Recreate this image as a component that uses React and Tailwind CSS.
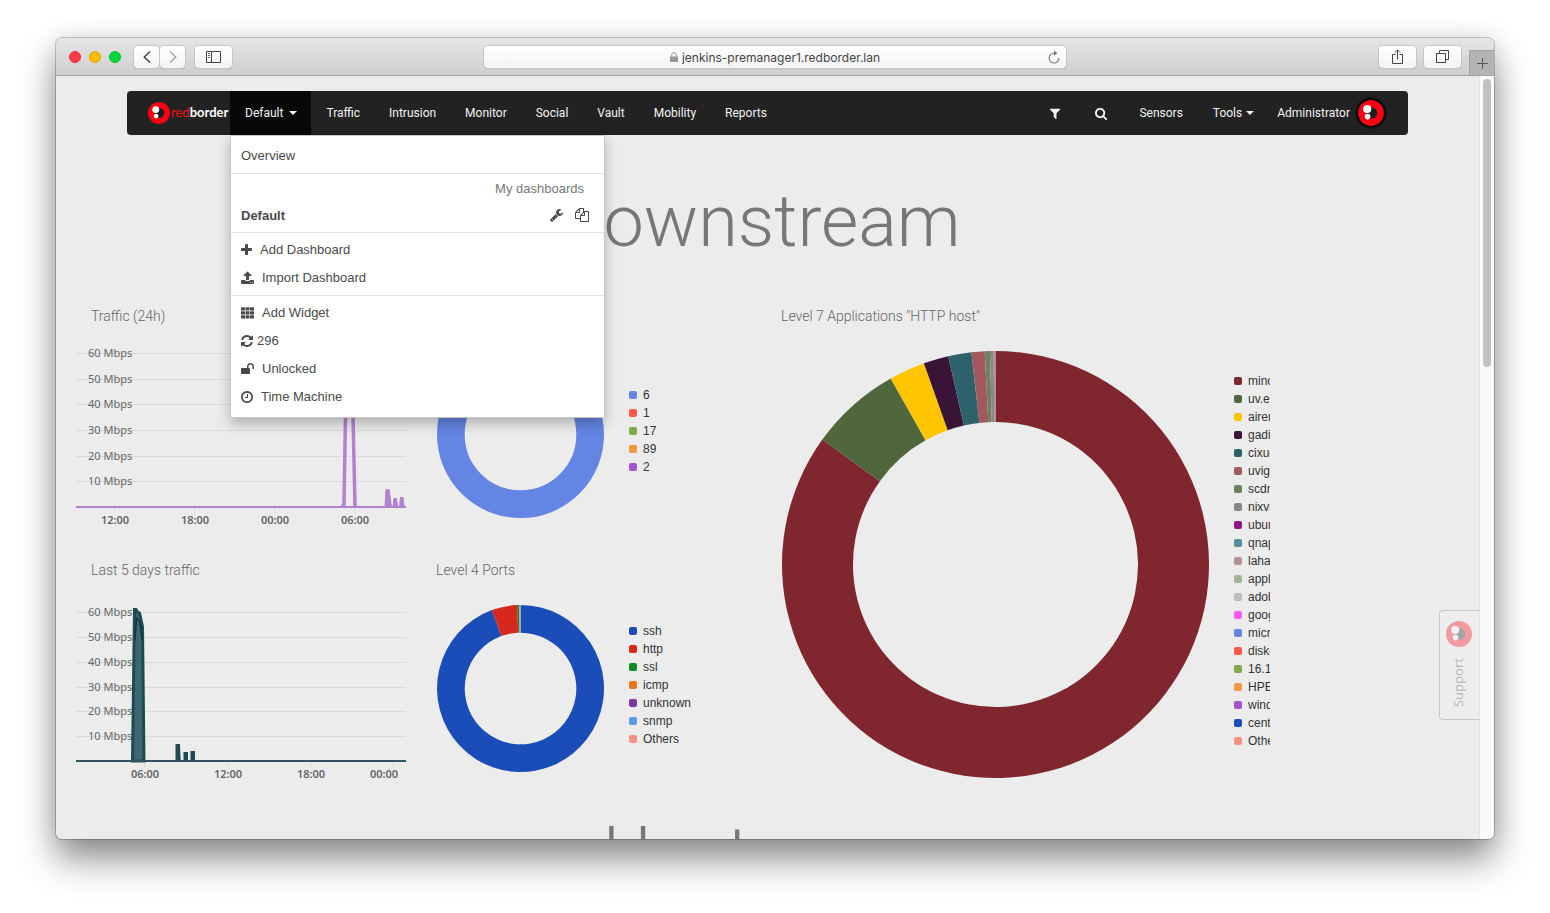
import React from "react";

const ICONS = {
  filter: ["192 0 1408 1792", "M1595 295q17 41-14 70l-493 493v742q0 42-39 59-13 5-25 5-27 0-45-19l-256-256q-19-19-19-45v-486l-493-493q-31-29-14-70 17-39 59-39h1280q42 0 59 39z"],
  search: ["64 0 1664 1792", "M1216 832q0-185-131.5-316.5t-316.5-131.5-316.5 131.5-131.5 316.5 131.5 316.5 316.5 131.5 316.5-131.5 131.5-316.5zm512 832q0 52-38 90t-90 38q-54 0-90-38l-343-342q-179 124-399 124-143 0-273.5-55.5t-225-150-150-225-55.5-273.5 55.5-273.5 150-225 225-150 273.5-55.5 273.5 55.5 225 150 150 225 55.5 273.5q0 220-124 399l343 343q37 37 37 90z"],
  plus: ["192 0 1408 1792", "M1600 736v192q0 40-28 68t-68 28h-416v416q0 40-28 68t-68 28h-192q-40 0-68-28t-28-68v-416h-416q-40 0-68-28t-28-68v-192q0-40 28-68t68-28h416v-416q0-40 28-68t68-28h192q40 0 68 28t28 68v416h416q40 0 68 28t28 68z"],
  upload: ["64 0 1664 1792", "M1344 1472q0-26-19-45t-45-19-45 19-19 45 19 45 45 19 45-19 19-45zm256 0q0-26-19-45t-45-19-45 19-19 45 19 45 45 19 45-19 19-45zm128-224v320q0 40-28 68t-68 28h-1472q-40 0-68-28t-28-68v-320q0-40 28-68t68-28h427q21 56 70.5 92t110.5 36h256q61 0 110.5-36t70.5-92h427q40 0 68 28t28 68zm-325-648q-17 40-59 40h-256v448q0 26-19 45t-45 19h-256q-26 0-45-19t-19-45v-448h-256q-42 0-59-40-17-39 14-69l448-448q18-19 45-19t45 19l448 448q31 30 14 69z"],
  refresh: ["0 0 1536 1792", "M1511 1056q0 5-1 7-64 268-268 434.5t-478 166.5q-146 0-282.5-55t-243.5-157l-129 129q-19 19-45 19t-45-19-19-45v-448q0-26 19-45t45-19h448q26 0 45 19t19 45-19 45l-137 137q71 66 161 102t187 36q134 0 250-65t186-179q11-17 53-117 8-23 30-23h192q13 0 22.5 9.5t9.5 22.5zm25-800v448q0 26-19 45t-45 19h-448q-26 0-45-19t-19-45 19-45l138-138q-148-137-349-137-134 0-250 65t-186 179q-11 17-53 117-8 23-30 23h-199q-13 0-22.5-9.5t-9.5-22.5v-7q65-268 270-434.5t480-166.5q146 0 284 55.5t245 156.5l130-129q19-19 45-19t45 19 19 45z"],
  unlock: ["64 0 1664 1792", "M1728 576v256q0 26-19 45t-45 19h-64q-26 0-45-19t-19-45v-256q0-106-75-181t-181-75-181 75-75 181v192h96q40 0 68 28t28 68v576q0 40-28 68t-68 28h-960q-40 0-68-28t-28-68v-576q0-40 28-68t68-28h672v-192q0-185 131.5-316.5t316.5-131.5 316.5 131.5 131.5 316.5z"],
  clock: ["128 0 1536 1792", "M1024 544v448q0 14-9 23t-23 9h-320q-14 0-23-9t-9-23v-64q0-14 9-23t23-9h224v-352q0-14 9-23t23-9h64q14 0 23 9t9 23zm416 352q0-148-73-273t-198-198-273-73-273 73-198 198-73 273 73 273 198 198 273 73 273-73 198-198 73-273zm224 0q0 209-103 385.5t-279.5 279.5-385.5 103-385.5-103-279.5-279.5-103-385.5 103-385.5 279.5-279.5 385.5-103 385.5 103 279.5 279.5 103 385.5z"],
  wrench: ["64 0 1664 1792", "M448 1472q0-26-19-45t-45-19-45 19-19 45 19 45 45 19 45-19 19-45zm644-420l-682 682q-37 37-90 37-52 0-91-37l-106-108q-38-36-38-90 0-53 38-91l681-681q39 98 114.5 173.5t173.5 114.5zm634-435q0 39-23 106-47 134-164.5 217.5t-258.5 83.5q-185 0-316.5-131.5t-131.5-316.5 131.5-316.5 316.5-131.5q58 0 121.5 16.5t107.5 46.5q16 11 16 28t-16 28l-293 169v224l193 107q5-3 79-48.5t135.5-81 70.5-35.5q15 0 23.5 10t8.5 25z"],
  files: ["0 0 1792 1792", "M1696 384q40 0 68 28t28 68v1216q0 40-28 68t-68 28h-960q-40 0-68-28t-28-68v-288h-544q-40 0-68-28t-28-68v-672q0-40 20-88t48-76l408-408q28-28 76-48t88-20h416q40 0 68 28t28 68v328q68-40 128-40h416zm-544 213l-299 299h299v-299zm-640-384l-299 299h299v-299zm196 647l316-316v-416h-384v416q0 40-28 68t-68 28h-416v640h512v-256q0-40 20-88t48-76zm956 804v-1152h-384v416q0 40-28 68t-68 28h-416v640h896z"],
  grid: ["64 0 1664 1792", [160, 672, 1184].map((y) => [64, 640, 1216].map((x) => `M${x + 70} ${y}h372q70 0 70 70v272q0 70-70 70h-372q-70 0-70-70v-272q0-70 70-70z`).join("")).join("")],
};

function Icon({ name, className = "h-3.5" }) {
  const [box, d] = ICONS[name];
  return (
    <svg viewBox={box} className={`w-auto shrink-0 fill-current ${className}`} aria-hidden="true">
      <path d={d} />
    </svg>
  );
}

function Mark({ className }) {
  return (
    <svg viewBox="0 0 26 26" className={className} aria-hidden="true">
      <circle cx="13" cy="13" r="13" fill="#ff0012" />
      <circle cx="13.500" cy="13" r="5.700" fill="#1d1d1d" />
      <circle cx="9.2" cy="9" r="4.1" fill="#fff" />
      <circle cx="9.6" cy="16.6" r="2.800" fill="#fff" />
    </svg>
  );
}

const toolButton =
  "flex h-[22px] items-center justify-center rounded bg-gradient-to-b from-white to-[#f3f3f3] text-[#444] shadow-[0_0_0_1px_#c6c6c6,0_1px_1px_#9a9a9a]";

function BrowserBar() {
  return (
    <header className="grid h-[38px] shrink-0 grid-cols-[1fr_minmax(0,582px)_1fr] items-center border-b border-[#a3a3a3] bg-gradient-to-b from-[#e6e6e6] to-[#cecece]">
      <div className="flex items-center pl-[13px]">
        <div className="flex gap-2">
          <button aria-label="Close" className="size-3 rounded-full border border-[#e2333b] bg-[#ff3b47]" />
          <button aria-label="Minimise" className="size-3 rounded-full border border-[#e0a200] bg-[#ffbd00]" />
          <button aria-label="Zoom" className="size-3 rounded-full border border-[#10b92e] bg-[#00d63a]" />
        </div>
        <div className="ml-[13px] flex gap-px">
          <button aria-label="Back" className={`w-[25px] ${toolButton}`}>
            <svg viewBox="0 0 8 14" className="h-3.5 w-2" fill="none" stroke="currentColor" strokeWidth="1.5"><path d="M7 1.5 1.3 7 7 12.5" /></svg>
          </button>
          <button aria-label="Forward" className={`w-[25px] ${toolButton}`}>
            <svg viewBox="0 0 8 14" className="h-3.5 w-2" fill="none" stroke="#aaa" strokeWidth="1.5"><path d="M1 1.5 6.7 7 1 12.5" /></svg>
          </button>
        </div>
        <button aria-label="Sidebar" className={`ml-2.5 w-[37px] ${toolButton}`}>
          <svg viewBox="0 0 15 12" className="h-3 w-[15px]" fill="none" stroke="currentColor"><path d="M.5.5h14v11H.5zM5.500.5v11" /><path d="M2 2.500h2M2 4.500h2M2 6.500h2" strokeWidth=".8" /></svg>
        </button>
      </div>
      <form className="flex h-[22px] items-center rounded bg-gradient-to-b from-white to-[#f3f3f3] pr-1.5 pl-[18px] shadow-[0_0_0_1px_#c6c6c6,0_1px_1px_#9a9a9a]">
        <label className="flex flex-1 items-center justify-center gap-1">
          <svg viewBox="0 0 8 10" className="h-2.5 w-2" aria-hidden="true"><path d="M0 4.500h8V10H0z" fill="#999" /><path d="M1.700 5V3a2.300 2.300 0 0 1 4.600 0v2" fill="none" stroke="#999" /></svg>
          <input aria-label="Address" defaultValue="jenkins-premanager1.redborder.lan" className="field-sizing-content bg-transparent pt-0.5 font-['Inter',sans-serif] text-xs text-[#444] outline-none" />
        </label>
        <button type="button" aria-label="Reload">
          <svg viewBox="0 0 12 14" className="h-3.5 w-3" fill="none" stroke="#777" strokeWidth="1.100"><path d="M6 3.200a4.900 4.900 0 1 0 4.900 4.900" /><path d="M6 .6v5.200l3.400-2.600z" fill="#777" stroke="none" /></svg>
        </button>
      </form>
      <div className="flex h-full items-center justify-end">
        <button aria-label="Share" className={`w-[37px] ${toolButton}`}>
          <svg viewBox="0 0 11 16" className="h-4 w-[11px]" fill="none" stroke="currentColor"><path d="M3.500 5.500h-3v9h10v-9h-3M5.500 10.500V1M3 3.500 5.500.9 8 3.500" /></svg>
        </button>
        <button aria-label="Show tabs" className={`ml-2 w-[37px] ${toolButton}`}>
          <svg viewBox="0 0 13 13" className="size-[13px]" fill="none" stroke="currentColor"><path d="M.5 3.500h9v9h-9zM3.500 3.500v-3h9v9h-3" /></svg>
        </button>
        <button aria-label="New tab" className="ml-2 flex h-[25px] w-[25px] items-center justify-center self-end border-t border-l border-[#a3a3a3] bg-[#b4b4b4]">
          <svg viewBox="0 0 11 11" className="size-[11px]" stroke="#555"><path d="M5.500 0v11M0 5.500h11" /></svg>
        </button>
      </div>
    </header>
  );
}

const Caret = () => (
  <svg viewBox="0 0 8 4" className="h-1 w-2 fill-current" aria-hidden="true"><path d="M0 0h8L4 4z" /></svg>
);

const navLink = "flex h-11 items-center pl-[15px]";
const row = "flex h-7 w-full items-center px-2.5";

function DashboardMenu() {
  return (
    <div className="absolute top-full left-0 z-20 w-[375px] border border-[#c8c8c8] bg-white pt-1.5 pb-1.5 font-['Liberation_Sans',Arial,sans-serif] text-[13px] text-[#4a4a4a] shadow-[0_6px_12px_rgba(0,0,0,0.25)]">
      <a href="#overview" className={row}>Overview</a>
      <hr className="mt-[3px] border-[#e2e2e2]" />
      <p className="flex h-7 items-center justify-end pt-0.5 pr-5 text-[#777]">My dashboards</p>
      <div className={`${row} justify-between pr-[15px]`}>
        <a href="#default" className="font-bold">Default</a>
        <span className="flex gap-3 pb-0.5">
          <button aria-label="Configure"><Icon name="wrench" /></button>
          <button aria-label="Duplicate"><Icon name="files" /></button>
        </span>
      </div>
      <hr className="mt-0.5 mb-[3px] border-[#e2e2e2]" />
      <button className={`${row} gap-2`}><Icon name="plus" />Add Dashboard</button>
      <button className={`${row} gap-2`}><Icon name="upload" />Import Dashboard</button>
      <hr className="mt-[3px] mb-[3px] border-[#e2e2e2]" />
      <button className={`${row} gap-2`}><Icon name="grid" />Add Widget</button>
      <button className={`${row} gap-1`}><Icon name="refresh" />296</button>
      <button className={`${row} gap-2`}><Icon name="unlock" />Unlocked</button>
      <button className={`${row} gap-2`}><Icon name="clock" />Time Machine</button>
    </div>
  );
}

function NavBar() {
  return (
    <nav className="mx-[71px] mt-[15px] flex h-11 items-center rounded bg-[#222] text-xs text-[#f2f2f2]">
      <a href="#home" className="flex w-[103px] items-center gap-px pl-[21px] font-['Lato',sans-serif] text-[13px]">
        <Mark className="size-[22px] shrink-0" />
        <span className="text-[#f0101c]">red<span className="font-bold text-white">border</span></span>
      </a>
      <div className="relative">
        <button className={`${navLink} gap-1.5 bg-[#080808] pr-3.5`}>Default<Caret /></button>
        <DashboardMenu />
      </div>
      {["Traffic", "Intrusion", "Monitor", "Social", "Vault", "Mobility", "Reports"].map((t) => (
        <a key={t} href={`#${t.toLowerCase()}`} className={`${navLink} pr-3.5`}>{t}</a>
      ))}
      <div className="ml-auto flex items-center">
        <button aria-label="Filter" className="flex h-11 w-[46px] items-center justify-center"><Icon name="filter" className="h-[13px]" /></button>
        <button aria-label="Search" className="flex h-11 w-[46px] items-center justify-center"><Icon name="search" className="h-[13px]" /></button>
        <a href="#sensors" className={`${navLink} pr-[15px]`}>Sensors</a>
        <button className={`${navLink} gap-1 pr-[15px]`}>Tools<Caret /></button>
        <button className="flex h-11 items-center gap-2 pr-6 pl-2">
          Administrator
          <Mark className="size-[26px] rounded-full shadow-[0_0_2px_2px_#000]" />
        </button>
      </div>
    </nav>
  );
}

function Donut({ size, outer, inner, slices, className }) {
  const c = size / 2;
  const at = (deg, r) => {
    const a = (deg * Math.PI) / 180;
    return `${(c + r * Math.sin(a)).toFixed(2)} ${(c - r * Math.cos(a)).toFixed(2)}`;
  };
  let start = 0;
  return (
    <svg viewBox={`0 0 ${size} ${size}`} className={`shrink-0 ${className}`} aria-hidden="true">
      {slices.map(([end, fill]) => {
        const from = start;
        start = end;
        if (end - from >= 360) {
          return <circle key={end} cx={c} cy={c} r={(outer + inner) / 2} fill="none" stroke={fill} strokeWidth={outer - inner} />;
        }
        const big = end - from > 180 ? 1 : 0;
        return <path key={end} fill={fill} d={`M${at(from, outer)}A${outer} ${outer} 0 ${big} 1 ${at(end, outer)}L${at(end, inner)}A${inner} ${inner} 0 ${big} 0 ${at(from, inner)}Z`} />;
      })}
    </svg>
  );
}

function Legend({ items, className = "" }) {
  return (
    <ul className={`overflow-hidden pb-2 font-['Liberation_Sans',Arial,sans-serif] text-xs text-[#333] ${className}`}>
      {items.map(([label, color]) => (
        <li key={label} className="flex h-[18px] items-center gap-1.5 whitespace-nowrap">
          <span className="size-2 shrink-0 rounded-[2px]" style={{ backgroundColor: color }} />
          {label}
        </li>
      ))}
    </ul>
  );
}

function Widget({ title, className = "", children }) {
  return (
    <section className={`pt-1.5 ${className}`}>
      <h3 className="h-5 pl-[15px] text-sm leading-5 font-light text-[#666]">{title}</h3>
      {children}
    </section>
  );
}

function AreaChart({ lines, base, ticks, labelY, children }) {
  return (
    <svg viewBox="0 0 330 213" className="w-full font-['Noto_Sans',sans-serif] text-[11px]" role="img">
      {lines.map((y) => <path key={y} d={`M0 ${y + 0.5}H330`} stroke="#dadada" />)}
      {ticks.map(([x]) => <path key={x} d={`M${x + 0.5} ${base}v6`} stroke="#dadada" />)}
      {lines.map((y, i) => <text key={y} x="12" y={y + 4} fill="#666">{`${60 - i * 10} Mbps`}</text>)}
      {ticks.map(([x, t, labelX]) => <text key={t} x={labelX || x + 1} y={labelY} textAnchor="middle" fill="#666" fontWeight="600">{t}</text>)}
      {children}
    </svg>
  );
}

const protocols = [["6", "#6485e3"], ["1", "#ff5a49"], ["17", "#7fab4a"], ["89", "#f39740"], ["2", "#a354cd"]];
const ports = [["ssh", "#1b4db9"], ["http", "#d6281c"], ["ssl", "#118a2a"], ["icmp", "#e6771c"], ["unknown", "#7f37a5"], ["snmp", "#5d9bea"], ["Others", "#ff8f84"]];
const hosts = [
  ["mino", "#80262f"], ["uv.es", "#50673e"], ["airen", "#ffc600"], ["gadis", "#3a1437"], ["cixug", "#2d626c"],
  ["uvigo", "#a3585f"], ["scdn", "#6e8060"], ["nixval", "#888"], ["ubuntu", "#96128d"], ["qnap", "#52909f"],
  ["lahar", "#b19294"], ["apple", "#a4b596"], ["adobe", "#bcbcbc"], ["google", "#ff5bee"], ["micro", "#6485e3"],
  ["disko", "#ff5a49"], ["16.1", "#7fab4a"], ["HPE", "#f39740"], ["wind", "#a354cd"], ["cento", "#1b4db9"], ["Others", "#ff8f84"],
];

export default function App() {
  return (
    <div className="flex h-screen flex-col bg-white px-14 pt-[38px] pb-[74px] font-['Roboto',sans-serif]">
      <div className="flex min-h-0 flex-1 flex-col overflow-hidden rounded-md bg-[#ececec] shadow-[0_0_0_1px_rgba(0,0,0,0.2),0_20px_36px_rgba(0,0,0,0.45),0_0_24px_rgba(0,0,0,0.1)]">
        <BrowserBar />
        <div className="flex min-h-0 flex-1">
          <main className="relative min-w-0 flex-1 overflow-hidden">
            <NavBar />
            <h1 className="mt-[51px] pr-[18px] text-center text-7xl leading-[72px] font-light text-[#777]">Downstream</h1>
            <div className="mt-[42px] mr-[19px] ml-5 grid grid-cols-[330fr_330fr_694fr] grid-rows-[239px_239px] gap-[15px]">
              <Widget title="Traffic (24h)">
                <AreaChart lines={[27, 53, 78, 104, 130, 155]} base={181} labelY={198} ticks={[[38, "12:00"], [118, "18:00"], [198, "00:00"], [278, "06:00"]]}>
                  <path d="M266 181L268 178 269.500 90V24M277 24V90L279 181" fill="none" stroke="#b282cf" strokeWidth="3.500" />
                  <path d="M0 181H330" stroke="#b282cf" strokeWidth="2" />
                  <path d="M309 181l1-17.500h3l2.500 17.500zM317 181l.8-8.500h2.700l1 8.500zM323.500 181l1-9.500h2.500l1 9.500z" fill="#b282cf" stroke="#b282cf" />
                </AreaChart>
              </Widget>
              <Widget title="Level 4 Protocols">
                <div className="mt-[25px] ml-4 flex items-center gap-[25px]">
                  <Donut className="size-[167px]" size={167} outer={83.5} inner={55.8} slices={[[360, "#6485e3"]]} />
                  <Legend items={protocols} />
                </div>
              </Widget>
              <Widget title={'Level 7 Applications "HTTP host"'} className="row-span-2">
                <div className="mt-[25px] ml-4 flex items-center gap-[25px]">
                  <Donut
                    className="size-[427px]"
                    size={427}
                    outer={213.5}
                    inner={142.5}
                    slices={[[305.8, "#80262f"], [330.6, "#50673e"], [340.4, "#ffc600"], [347.2, "#3a1437"], [353.5, "#2d626c"], [357.1, "#a3585f"], [358.5, "#6e8060"], [359.5, "#888888"], [359.999, "#b08f9c"]]}
                  />
                  <Legend items={hosts} className="w-9" />
                </div>
              </Widget>
              <Widget title="Last 5 days traffic">
                <AreaChart lines={[32, 57, 82, 107, 131, 156]} base={181} labelY={198} ticks={[[68, "06:00"], [151, "12:00"], [234, "18:00"], [317, "00:00", 308]]}>
                  <path d="M56.500 181L58.500 29.500H60L62 33H63.500L66.500 47 68 181Z" fill="#3e6871" stroke="#1f4a52" strokeWidth="3" />
                  <path d="M59 60L60.500 38 64 42 66 60" fill="none" stroke="#10373e" strokeWidth="1.500" />
                  <path d="M100.500 181V165h2.500l.7 16zM108.500 181V173h2.500v8zM115.500 181V172h2.500v9z" fill="#1f4a52" stroke="#1f4a52" strokeWidth="2" />
                  <path d="M0 181H330" stroke="#2f565e" strokeWidth="2" />
                </AreaChart>
              </Widget>
              <Widget title="Level 4 Ports">
                <div className="mt-[25px] ml-4 flex items-center gap-[25px]">
                  <Donut
                    className="size-[167px]"
                    size={167}
                    outer={83.5}
                    inner={55.8}
                    slices={[[340, "#1b4db9"], [357.7, "#d6281c"], [359, "#118a2a"], [359.5, "#c8906a"], [359.999, "#b9a9a8"]]}
                  />
                  <Legend items={ports} />
                </div>
              </Widget>
            </div>
            <h2 className="mt-[25px] pr-[18px] text-center text-7xl leading-[72px] font-light text-[#777]">Upstream</h2>
            <button className="absolute right-0 bottom-[119px] flex h-[110px] w-10 flex-col items-center gap-[11px] rounded-l-sm border border-r-0 border-[#c8c8c8] bg-[#eee] pt-2.5 pr-0.5 text-[#bbb]">
              <Mark className="size-[26px] opacity-35" />
              <span className="rotate-180 font-['Noto_Sans',sans-serif] text-[13px] [writing-mode:vertical-rl]">Support</span>
            </button>
          </main>
          <div className="w-[15px] shrink-0 border-l border-[#e2e2e2] bg-[#fafafa] pt-[3px] pl-[3px]">
            <div className="h-72 w-2 rounded-full bg-[#c1c1c1]" />
          </div>
        </div>
      </div>
    </div>
  );
}
